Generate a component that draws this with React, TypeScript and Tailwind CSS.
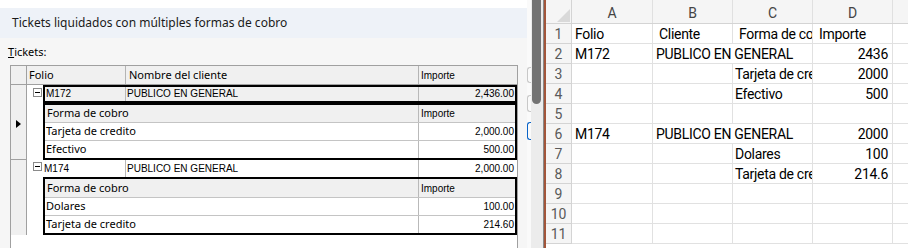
import React from "react";

const seg = "font-['Noto_Sans',sans-serif]";
const ms = "font-['Liberation_Sans',Arial,sans-serif]";

function Expander() {
  return (
    <div className="flex h-[9px] w-[9px] items-center justify-center border border-[#8a8a8a] bg-white">
      <div className="h-px w-[5px] bg-black" />
    </div>
  );
}

function ParentRow({ folio, cliente, importe, boxed }: { folio: string; cliente: string; importe: string; boxed: boolean }) {
  return (
    <div className={`flex ${boxed ? "h-[18px]" : "h-[17px]"}`}>
      <div className={`flex w-[16px] justify-start pl-[6px] ${boxed ? "pt-[3px]" : "pt-[2px]"}`}>
        <Expander />
      </div>
      {boxed ? (
        <div className={`flex flex-1 border-2 border-black bg-[#f0f0f0] text-[10px] leading-[14px] text-black ${ms}`}>
          <div className="w-[81px] border-r border-[#b9b9b9] pl-[1px]">{folio}</div>
          <div className="w-[293px] border-r border-[#b9b9b9] pl-[1px]">{cliente}</div>
          <div className="flex-1 pr-[1px] text-right">{importe}</div>
        </div>
      ) : (
        <div className={`flex flex-1 items-center bg-white text-[10px] leading-[17px] text-black ${ms}`}>
          <div className="w-[83px] border-r border-[#b9b9b9] pl-[1px]">{folio}</div>
          <div className="w-[293px] border-r border-[#b9b9b9] pl-[1px]">{cliente}</div>
          <div className="flex-1 pr-[3px] text-right">{importe}</div>
        </div>
      )}
    </div>
  );
}

function ChildBand({ rows, tall }: { rows: [string, string][]; tall: boolean }) {
  return (
    <div className="flex">
      <div className="w-[16px]" />
      <div className="flex flex-1 flex-col border-2 border-black bg-white">
        <div className={`flex ${tall ? "h-[19px]" : "h-[18px]"} border-b border-[#c4c4c4] bg-[#f0f0f0]`}>
          <div className={`flex w-[374px] items-center border-r border-[#b9b9b9] pl-[2px] text-[11px] text-black ${seg}`}>Forma de cobro</div>
          <div className={`flex flex-1 items-center pl-[2px] text-[10px] text-black ${ms}`}>Importe</div>
        </div>
        {rows.map(([a, b], i) => (
          <div key={i} className={`flex ${i === 0 ? "h-[18px] border-b border-[#c4c4c4]" : "h-[17px]"}`}>
            <div className={`flex w-[374px] items-center border-r border-[#b9b9b9] pl-[1px] text-[11px] text-black ${seg}`}>{a}</div>
            <div className={`flex flex-1 items-center justify-end pr-[1px] text-[10px] text-black ${ms}`}>{b}</div>
          </div>
        ))}
      </div>
    </div>
  );
}

function Grid() {
  return (
    <div className="ml-[10px] flex w-[508px] flex-1 flex-col border-x border-t border-[#a0a0a0] bg-white">
      <div className="flex h-[19px] border-b border-[#a0a0a0] bg-[#f0f0f0] text-black">
        <div className="w-[16px] border-r border-[#a0a0a0]" />
        <div className={`flex w-[99px] items-center border-r border-[#b4b4b4] pl-[2px] text-[11px] ${seg}`}>Folio</div>
        <div className={`flex w-[293px] items-center border-r border-[#b4b4b4] pl-[3px] text-[11px] ${seg}`}>Nombre del cliente</div>
        <div className={`flex flex-1 items-center pl-[2px] text-[10px] ${ms}`}>Importe</div>
      </div>
      <div className="flex">
        <div className="w-[16px] border-r border-b border-[#a0a0a0] bg-[#f0f0f0] pl-[5px] pt-[35px]">
          <div className="h-0 w-0 border-y-[4px] border-l-[5px] border-y-transparent border-l-black" />
        </div>
        <div className="flex flex-1 flex-col">
          <ParentRow folio="M172" cliente="PUBLICO EN GENERAL" importe="2,436.00" boxed />
          <ChildBand tall={false} rows={[["Tarjeta de credito", "2,000.00"], ["Efectivo", "500.00"]]} />
        </div>
      </div>
      <div className="flex">
        <div className="w-[16px] border-r border-[#a0a0a0] bg-[#f0f0f0]" />
        <div className="flex flex-1 flex-col">
          <ParentRow folio="M174" cliente="PUBLICO EN GENERAL" importe="2,000.00" boxed={false} />
          <ChildBand tall rows={[["Dolares", "100.00"], ["Tarjeta de credito", "214.60"]]} />
        </div>
      </div>
      <div className="flex-1" />
    </div>
  );
}

const xl = "font-['Roboto',sans-serif]";

type Row = { a?: string; b?: string; bc?: string; c?: string; d?: string; dLeft?: boolean };

const rows: Row[] = [
  { a: "Folio", b: "Cliente", c: "Forma de cobro", d: "Importe", dLeft: true },
  { a: "M172", bc: "PUBLICO EN GENERAL", d: "2436" },
  { c: "Tarjeta de credito", d: "2000" },
  { c: "Efectivo", d: "500" },
  {},
  { a: "M174", bc: "PUBLICO EN GENERAL", d: "2000" },
  { c: "Dolares", d: "100" },
  { c: "Tarjeta de credito", d: "214.6" },
  {},
  {},
  {},
];

function Excel() {
  return (
    <div className={`flex h-[248px] flex-1 flex-col overflow-hidden bg-white text-black ${xl}`}>
      <div className="flex h-[24px] shrink-0 border-b border-[#d4d4d4] bg-[#f5f5f5] text-[14px] text-[#444]">
        <div className="relative w-[26px] border-r border-[#d4d4d4]">
          <svg width="26" height="23" className="block">
            <polygon points="24,9 24,22 11,22" fill="#d9d9d9" />
          </svg>
        </div>
        {["A", "B", "C"].map((l, i) => (
          <div key={l} className={`flex ${i === 0 ? "w-[81px]" : "w-[80px]"} items-center justify-center border-r border-[#e0e0e0] pt-[4px]`}>{l}</div>
        ))}
        <div className="flex w-[80px] items-center justify-center border-r border-[#e0e0e0] pt-[4px]">D</div>
        <div className="flex-1" />
      </div>
      {rows.map((r, i) => (
        <div key={i} className="flex h-[20px] shrink-0 text-[14px] leading-[17px] tracking-[-0.3px]">
          <div className="w-[26px] border-r border-b border-[#d4d4d4] bg-[#f5f5f5] pt-[2px] text-center text-[14px] tracking-normal text-[#5a5a5a]">{i + 1}</div>
          <div className="w-[81px] overflow-hidden whitespace-nowrap border-r border-b border-[#e1e1e1] pl-[3px] pt-[2px]">{r.a}</div>
          {r.bc ? (
            <div className="w-[160px] overflow-hidden whitespace-nowrap border-r border-b border-[#e1e1e1] pl-[3px] pt-[2px]">{r.bc}</div>
          ) : (
            <>
              <div className="w-[80px] overflow-hidden whitespace-nowrap border-r border-b border-[#e1e1e1] pl-[6px] pt-[2px]">{r.b}</div>
              <div className={`w-[80px] overflow-hidden whitespace-nowrap border-r border-b border-[#e1e1e1] pt-[2px] ${i === 0 ? "pl-[6px]" : "pl-[2px]"}`}>{r.c}</div>
            </>
          )}
          <div className={`w-[80px] overflow-hidden whitespace-nowrap border-r border-b border-[#e1e1e1] pt-[2px] ${r.dLeft ? "pl-[6px]" : "pr-[4px] text-right"}`}>{r.d}</div>
          <div className="flex-1 border-b border-[#e1e1e1]" />
        </div>
      ))}
    </div>
  );
}

export default function App() {
  return (
    <div className="flex h-[248px] w-[908px] overflow-hidden bg-white">
      <div className="flex h-[248px] w-[527px] shrink-0 flex-col bg-[#f6f6f6]">
        <div className="h-[8px] shrink-0 bg-white" />
        <div className={`flex h-[30px] shrink-0 items-center bg-[#eef2f8] pl-[12px] text-[12px] text-[#1a1a1a] ${seg}`}>
          Tickets liquidados con múltiples formas de cobro
        </div>
        <div className={`h-[27px] shrink-0 pl-[8px] pt-[7px] text-[11px] leading-[14px] text-black ${seg}`}>
          <span className="underline">T</span>ickets:
        </div>
        <Grid />
      </div>
      <div className="flex w-[4px] shrink-0 flex-col bg-[#fafafa]">
        <div className="mt-[67px] h-[16px] w-[4px] rounded-l-[3px] border-y border-l border-[#c8c8c8]" />
        <div className="mt-[12px] h-[17px] w-[4px] rounded-l-[3px] border-y border-l border-[#c8c8c8]" />
        <div className="mt-[10px] h-[18px] w-[4px] rounded-l-[3px] border-y border-l border-[#0a64c8]" />
      </div>
      <div className="w-[12px] shrink-0 bg-[#ececec] pl-[1px]">
        <div className="h-[104px] w-[9px] rounded-b-[5px] bg-[#737373]" />
      </div>
      <div className="w-[1px] shrink-0 bg-[#8a8a8a]" />
      <div className="w-[2px] shrink-0 bg-[#a2553a]" />
      <Excel />
    </div>
  );
}
